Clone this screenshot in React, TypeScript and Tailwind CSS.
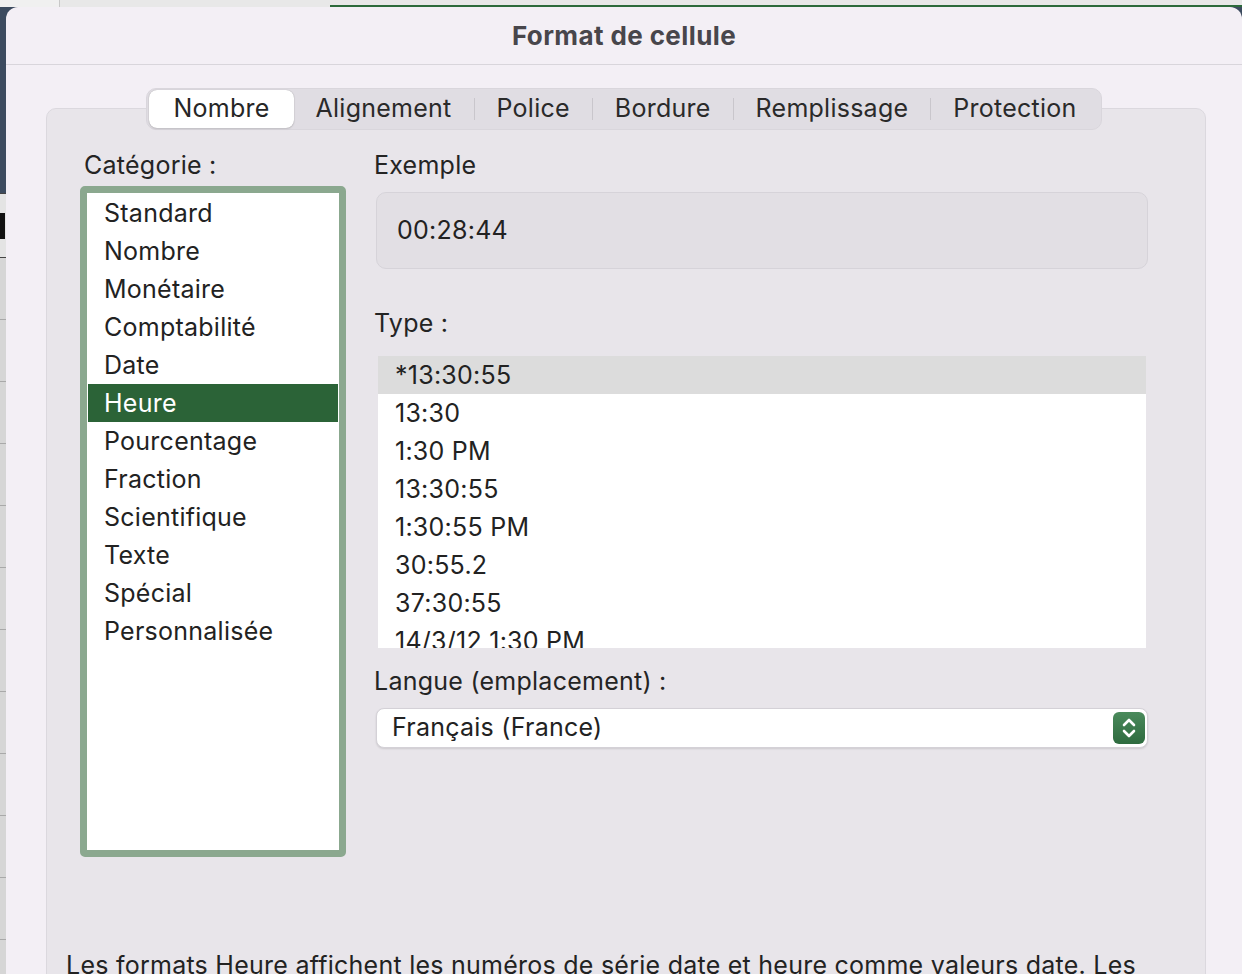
import React from "react";

const categories = [
  "Standard",
  "Nombre",
  "Monétaire",
  "Comptabilité",
  "Date",
  "Heure",
  "Pourcentage",
  "Fraction",
  "Scientifique",
  "Texte",
  "Spécial",
  "Personnalisée",
];

const types = [
  "*13:30:55",
  "13:30",
  "1:30 PM",
  "13:30:55",
  "1:30:55 PM",
  "30:55.2",
  "37:30:55",
  "14/3/12 1:30 PM",
];

const tabs = ["Alignement", "Police", "Bordure", "Remplissage", "Protection"];

export default function App() {
  return (
    <div
      className="w-[1242px] h-[974px] overflow-hidden flex flex-col bg-[#e6e6e6] text-[#242424] text-[25px] tracking-[0.25px]"
      style={{ fontFamily: "Inter, 'Noto Sans', sans-serif" }}
    >
      {/* top strip of spreadsheet behind */}
      <div className="h-[7px] flex shrink-0">
        <div className="w-[60px] bg-[#f0f0f0] border-r border-[#c8c8c8]" />
        <div className="w-[270px] bg-[#e8e8e8]" />
        <div className="flex-1 flex flex-col">
          <div className="flex-1 bg-[#e8e8e8]" />
          <div className="h-[2px] bg-[#2c6a3b]" />
        </div>
      </div>
      <div className="flex flex-1 bg-[#3c4b5f]">
        {/* left strip */}
        <div className="w-[6px] flex flex-col shrink-0">
          <div className="h-[186px] bg-[#3c4b5f]" />
          <div className="h-[65px] bg-[#e4e4e4] border-y border-[#444] flex items-center">
            <div className="w-[5px] h-[26px] bg-[#111]" />
          </div>
          {Array.from({ length: 12 }).map((_, i) => (
            <div key={i} className="h-[62px] bg-[#d6d6d6] border-b border-[#a9a9a9]" />
          ))}
        </div>
        {/* dialog */}
        <div className="flex-1 bg-[#f3eff5] rounded-t-[12px] flex flex-col overflow-hidden">
          <div className="h-[58px] shrink-0 border-b border-[#d8d5db] flex items-center justify-center">
            <span className="text-[26px] font-bold text-[#48464b] tracking-[0.4px]">
              Format de cellule
            </span>
          </div>
          <div className="flex-1 flex flex-col pl-[40px] pr-[36px] pt-[23px]">
            {/* tabs */}
            <div className="relative z-10 self-center -mb-[22px] -ml-[4px] flex items-center h-[42px] p-[2px] rounded-[10px] bg-[#e0dde3] border border-[#d9d6dc]">
              <div className="h-[38px] px-[24px] flex items-center bg-white rounded-[8px] shadow-[0_0_1px_rgba(0,0,0,0.3),0_1px_2px_rgba(0,0,0,0.12)] text-[#262626]">
                Nombre
              </div>
              {tabs.map((t, i) => (
                <React.Fragment key={t}>
                  {i > 0 && <div className="w-px h-[22px] bg-[#c9c6cc]" />}
                  <div className="h-[38px] px-[22px] flex items-center text-[#2a2a2a]">
                    {t}
                  </div>
                </React.Fragment>
              ))}
            </div>
            {/* group box */}
            <div className="flex-1 border border-[#dbd8de] rounded-[10px] bg-[#e8e5ea] pt-[41px]">
              <div className="flex pl-[33px]">
                {/* left column */}
                <div className="w-[266px] shrink-0 flex flex-col">
                  <div className="pl-[4px] leading-[30px]">Catégorie :</div>
                  <div className="mt-[6px] h-[671px] border-[7px] border-[#8ba88f] rounded-[5px] bg-white pt-[1px] px-[1px]">
                    {categories.map((c) => (
                      <div
                        key={c}
                        className={
                          c === "Heure"
                            ? "h-[38px] leading-[38px] pl-[16px] bg-[#2b6337] text-white"
                            : "h-[38px] leading-[38px] pl-[16px] text-[#222]"
                        }
                      >
                        {c}
                      </div>
                    ))}
                  </div>
                </div>
                {/* right column */}
                <div className="ml-[28px] w-[774px] flex flex-col">
                  <div className="leading-[30px]">Exemple</div>
                  <div className="mt-[12px] ml-[2px] w-[772px] h-[77px] rounded-[10px] bg-[#e2dfe4] border border-[#d6d3d9] flex items-center pl-[20px] text-[#222]">
                    00:28:44
                  </div>
                  <div className="mt-[39px] leading-[30px]">Type :</div>
                  <div className="mt-[18px] ml-[4px] w-[768px] h-[292px] bg-white overflow-hidden">
                    {types.map((t, i) => (
                      <div
                        key={i}
                        className={
                          i === 0
                            ? "h-[38px] leading-[38px] pl-[17px] bg-[#dcdcdc] text-[#222]"
                            : "h-[38px] leading-[38px] pl-[17px] text-[#222]"
                        }
                      >
                        {t}
                      </div>
                    ))}
                  </div>
                  <div className="mt-[18px] leading-[30px]">Langue (emplacement) :</div>
                  <div className="mt-[12px] ml-[2px] w-[772px] h-[40px] rounded-[8px] bg-white border border-[#d4d1d7] shadow-[0_1px_2px_rgba(0,0,0,0.12)] flex items-center justify-between pl-[15px] pr-[2px]">
                    <span className="text-[#222]">Français (France)</span>
                    <div className="w-[32px] h-[32px] rounded-[6px] bg-gradient-to-b from-[#4a8a5b] to-[#2e6b3f] flex items-center justify-center">
                      <svg width="32" height="32" viewBox="0 0 32 32" fill="none">
                        <path d="M11 13 L16 8 L21 13" stroke="white" strokeWidth="2.6" strokeLinecap="round" strokeLinejoin="round" />
                        <path d="M11 19 L16 24 L21 19" stroke="white" strokeWidth="2.6" strokeLinecap="round" strokeLinejoin="round" />
                      </svg>
                    </div>
                  </div>
                </div>
              </div>
              <div className="mt-[93px] pl-[19px] leading-[30px] whitespace-nowrap text-[#222]">
                Les formats Heure affichent les numéros de série date et heure comme valeurs date. Les
              </div>
            </div>
          </div>
        </div>
      </div>
    </div>
  );
}
